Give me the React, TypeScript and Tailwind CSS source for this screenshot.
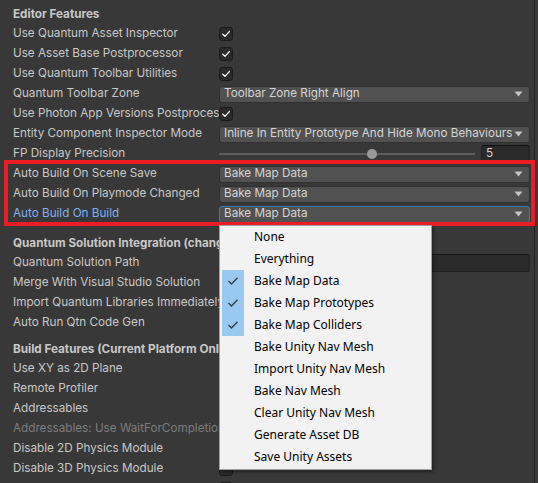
import React from "react";

const UI = { fontFamily: "Inter, 'Noto Sans', sans-serif" };
const MENU = { fontFamily: "'Noto Sans', 'Open Sans', sans-serif" };

function Check() {
  return (
    <div className="w-[14px] h-[14px] shrink-0 rounded-[3px] bg-[#2a2a2a] border border-[#1b1b1b] flex items-center justify-center">
      <svg width="10" height="10" viewBox="0 0 10 10">
        <path d="M1.8 5.2 L4 7.3 L8.3 2.6" fill="none" stroke="#f0f0f0" strokeWidth="1.4" strokeLinecap="round" strokeLinejoin="round" />
      </svg>
    </div>
  );
}

function EmptyCheck({ disabled }: { disabled?: boolean }) {
  return (
    <div className={"w-[14px] h-[14px] shrink-0 rounded-[3px] border " + (disabled ? "bg-[#303030] border-[#262626]" : "bg-[#2a2a2a] border-[#1b1b1b]")} />
  );
}

function Dropdown({ text, focus }: { text: string; focus?: boolean }) {
  return (
    <div
      className={
        "flex-1 h-[17px] rounded-[3px] bg-[#515151] border flex items-center pl-[4px] pr-[6px] " +
        (focus ? "border-[#3a79bb]" : "border-[#303030]")
      }
    >
      <span className="flex-1 whitespace-nowrap overflow-hidden text-[11.7px] text-[#d4d4d4] leading-none">{text}</span>
      <svg width="9" height="6" viewBox="0 0 9 6" className="shrink-0 ml-[2px]">
        <path d="M0.5 0.5 L8.5 0.5 L4.5 5.5 Z" fill="#c4c4c4" />
      </svg>
    </div>
  );
}

function Row({ label, children, labelClass }: { label: string; children?: React.ReactNode; labelClass?: string }) {
  return (
    <div className="h-5 flex items-center pl-[13px] pr-[4px]">
      <div className={"w-[206px] shrink-0 overflow-hidden whitespace-nowrap text-[11.7px] leading-none " + (labelClass ?? "text-[#c8c8c8]")}>
        {label}
      </div>
      <div className="flex-1 flex items-center">{children}</div>
    </div>
  );
}

function Header({ text, mt }: { text: string; mt: string }) {
  return (
    <div className={"h-[18px] flex items-center pl-[13px] whitespace-nowrap text-[11.7px] font-bold text-[#c8c8c8] leading-none " + mt}>
      {text}
    </div>
  );
}

const menuItems: { t: string; c: boolean }[] = [
  { t: "None", c: false },
  { t: "Everything", c: false },
  { t: "Bake Map Data", c: true },
  { t: "Bake Map Prototypes", c: true },
  { t: "Bake Map Colliders", c: true },
  { t: "Bake Unity Nav Mesh", c: false },
  { t: "Import Unity Nav Mesh", c: false },
  { t: "Bake Nav Mesh", c: false },
  { t: "Clear Unity Nav Mesh", c: false },
  { t: "Generate Asset DB", c: false },
  { t: "Save Unity Assets", c: false },
];

export default function App() {
  return (
    <div className="relative w-[538px] h-[483px] overflow-hidden bg-[#383838] flex" style={UI}>
      <div className="w-[534px] shrink-0 pt-[6px]">
        <Header text="Editor Features" mt="mt-0" />
        <Row label="Use Quantum Asset Inspector"><Check /></Row>
        <Row label="Use Asset Base Postprocessor"><Check /></Row>
        <Row label="Use Quantum Toolbar Utilities"><Check /></Row>
        <Row label="Quantum Toolbar Zone"><Dropdown text="Toolbar Zone Right Align" /></Row>
        <Row label="Use Photon App Versions Postprocessor"><Check /></Row>
        <Row label="Entity Component Inspector Mode"><Dropdown text="Inline In Entity Prototype And Hide Mono Behaviours" /></Row>
        <Row label="FP Display Precision">
          <div className="flex-1 flex items-center">
            <div className="relative w-[256px] h-[10px] flex items-center">
              <div className="w-full h-[2px] bg-[#5e5e5e]" />
              <div className="absolute left-[148px] top-0 w-[10px] h-[10px] rounded-full bg-[#999999]" />
            </div>
            <div className="ml-[6px] flex-1 h-[18px] rounded-[3px] bg-[#2a2a2a] border border-[#212121] border-t-[#0f0f0f] flex items-center pl-[4px] text-[11.7px] text-[#d2d2d2] leading-none">
              5
            </div>
          </div>
        </Row>
        <Row label="Auto Build On Scene Save"><Dropdown text="Bake Map Data" /></Row>
        <Row label="Auto Build On Playmode Changed"><Dropdown text="Bake Map Data" /></Row>
        <Row label="Auto Build On Build" labelClass="text-[#7eb0f2]"><Dropdown text="Bake Map Data" focus /></Row>

        <Header text="Quantum Solution Integration (changes require recompile)" mt="mt-[11px]" />
        <Row label="Quantum Solution Path">
          <div className="flex-1 h-[18px] rounded-[3px] bg-[#2a2a2a] border border-[#212121] border-t-[#141414]" />
        </Row>
        <Row label="Merge With Visual Studio Solution"><EmptyCheck /></Row>
        <Row label="Import Quantum Libraries Immediately"><EmptyCheck /></Row>
        <Row label="Auto Run Qtn Code Gen"><EmptyCheck /></Row>

        <Header text="Build Features (Current Platform Only)" mt="mt-[8px]" />
        <Row label="Use XY as 2D Plane"><EmptyCheck /></Row>
        <Row label="Remote Profiler"><EmptyCheck /></Row>
        <Row label="Addressables"><EmptyCheck /></Row>
        <Row label="Addressables: Use WaitForCompletion" labelClass="text-[#7d7d7d]"><EmptyCheck disabled /></Row>
        <Row label="Disable 2D Physics Module"><EmptyCheck /></Row>
        <Row label="Disable 3D Physics Module"><EmptyCheck /></Row>
        <Row label="Disable Physics Module"><EmptyCheck /></Row>
      </div>
      <div className="w-px h-full bg-[#232323]" />
      <div className="flex-1 h-full bg-[#3a3a3a]" />

      {/* annotation */}
      <div className="absolute left-[4px] top-[160px] w-[531px] h-[66px] border-[4px] border-[#ec1c24] pointer-events-none" />

      {/* popup menu */}
      <div
        className="absolute left-[219px] top-[225px] w-[213px] h-[245px] bg-[#f2f2f2] border border-[#a0a0a0] shadow-[2px_2px_3px_rgba(0,0,0,0.35)] pt-0 px-[2px]"
        style={MENU}
      >
        {menuItems.map((m) => (
          <div key={m.t} className="h-[22px] flex items-center">
            <div className={"w-[22px] h-[22px] shrink-0 flex items-center justify-center " + (m.c ? "bg-[#99c9f1]" : "")}>
              {m.c && (
                <svg width="12" height="10" viewBox="0 0 12 10">
                  <path d="M1.5 5 L4.5 8 L10.5 1.8" fill="none" stroke="#2f3a44" strokeWidth="1.3" />
                </svg>
              )}
            </div>
            <span className="ml-[10px] text-[12px] text-black leading-none whitespace-nowrap">{m.t}</span>
          </div>
        ))}
      </div>
    </div>
  );
}
